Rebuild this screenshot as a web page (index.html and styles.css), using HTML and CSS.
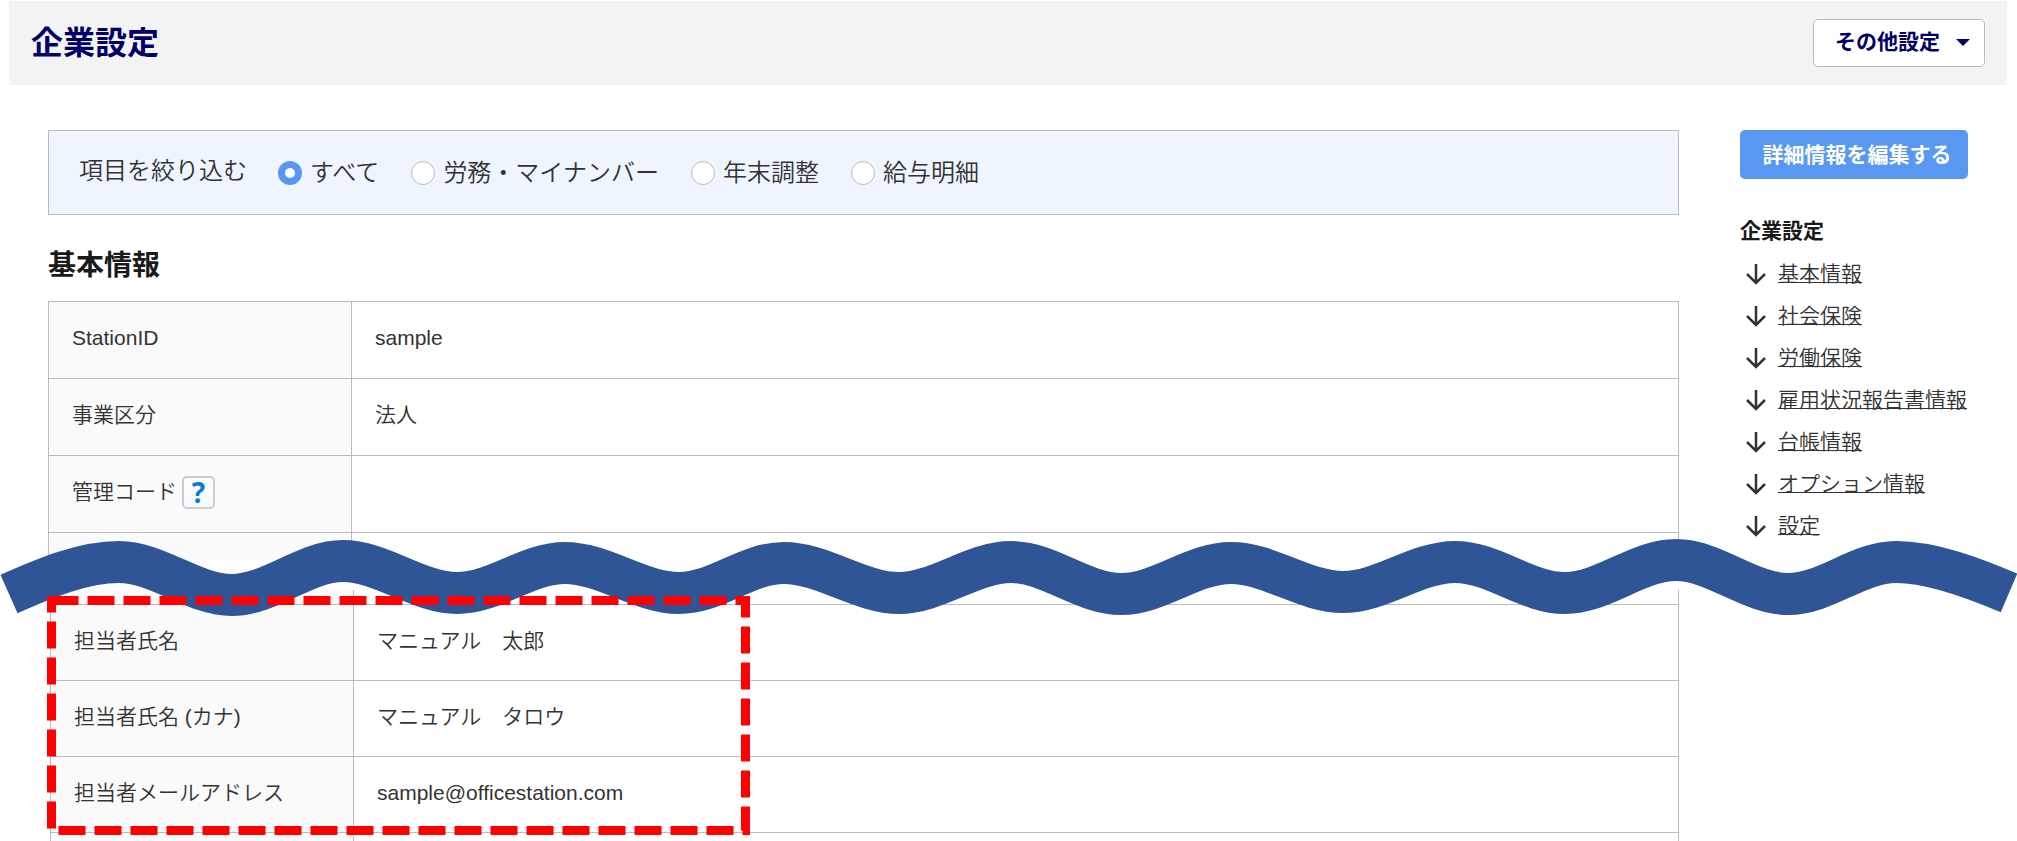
FILE: index.html
```html
<!DOCTYPE html>
<html lang="ja">
<head>
    <meta charset="UTF-8">
    <meta name="viewport" content="width=device-width, initial-scale=1">
    <title>企業設定</title>
    <link rel="stylesheet" href="styles.css">
</head>
<body>

<div class="page">
    <header class="page-header">
        <h1>企業設定</h1>
        <button type="button" class="menu-button" aria-haspopup="true">
            その他設定
            <span class="caret"></span>
        </button>
    </header>

    <div class="layout">
        <main class="content">
            <form class="filter">
                <span class="filter-title" id="filterTitle">項目を絞り込む</span>
                <div class="filter-options" role="radiogroup" aria-labelledby="filterTitle">
                    <label><input type="radio" name="filter" value="all" checked>すべて</label>
                    <label><input type="radio" name="filter" value="labor">労務・マイナンバー</label>
                    <label><input type="radio" name="filter" value="yearend">年末調整</label>
                    <label><input type="radio" name="filter" value="payslip">給与明細</label>
                </div>
            </form>

            <h2 id="basic">基本情報</h2>

            <table class="info-table">
                <tr>
                    <th scope="row">StationID</th>
                    <td>sample</td>
                </tr>
                <tr>
                    <th scope="row">事業区分</th>
                    <td>法人</td>
                </tr>
                <tr>
                    <th scope="row">
                        <div class="with-help">管理コード<button type="button" class="help">?</button></div>
                    </th>
                    <td></td>
                </tr>
                <tr class="cut-bottom">
                    <th></th>
                    <td></td>
                </tr>
            </table>

            <!-- 途中の項目を省略する波線 -->
            <div class="omission">
                <svg class="wave" viewBox="0 0 2017 90" preserveAspectRatio="none" aria-hidden="true">
                    <path d="M9,60 C45,44 83,28 119,28
                             C157,28 194,61 232,61 S305,27 343,27
                             S419,59 457,59 S527,29 565,29
                             S641,59 679,59 S746,29 784,29
                             S861,59 899,59 S973,28 1011,28
                             S1083,60 1121,60 S1193,29 1231,29
                             S1305,58 1343,58 S1417,28 1455,28
                             S1527,59 1565,59 S1638,26 1676,26
                             S1750,60 1788,60 S1858,28 1896,28
                             C1932,28 1974,44 2009,59"/>
                </svg>
            </div>

            <div class="contact">
                <table class="info-table info-table-contact">
                    <tr class="cut-top">
                        <th></th>
                        <td></td>
                    </tr>
                    <tr>
                        <th scope="row">担当者氏名</th>
                        <td>マニュアル　太郎</td>
                    </tr>
                    <tr>
                        <th scope="row">担当者氏名 (カナ)</th>
                        <td>マニュアル　タロウ</td>
                    </tr>
                    <tr>
                        <th scope="row">担当者メールアドレス</th>
                        <td>sample@officestation.com</td>
                    </tr>
                    <tr class="cut-end">
                        <th></th>
                        <td></td>
                    </tr>
                </table>
                <svg class="highlight" viewBox="0 0 703 239" aria-hidden="true">
                    <rect x="4.5" y="4.5" width="694" height="230"/>
                </svg>
            </div>
        </main>

        <aside class="side">
            <button type="button" class="edit-button">詳細情報を編集する</button>
            <nav class="side-nav" aria-labelledby="navTitle">
                <h3 id="navTitle">企業設定</h3>
                <ul>
                    <li><svg class="arrow" viewBox="0 0 22 22"><path d="M11 1v19M2 11l9 9 9-9"/></svg><a href="#basic">基本情報</a></li>
                    <li><svg class="arrow" viewBox="0 0 22 22"><path d="M11 1v19M2 11l9 9 9-9"/></svg><a href="#social">社会保険</a></li>
                    <li><svg class="arrow" viewBox="0 0 22 22"><path d="M11 1v19M2 11l9 9 9-9"/></svg><a href="#labor">労働保険</a></li>
                    <li><svg class="arrow" viewBox="0 0 22 22"><path d="M11 1v19M2 11l9 9 9-9"/></svg><a href="#employment">雇用状況報告書情報</a></li>
                    <li><svg class="arrow" viewBox="0 0 22 22"><path d="M11 1v19M2 11l9 9 9-9"/></svg><a href="#ledger">台帳情報</a></li>
                    <li><svg class="arrow" viewBox="0 0 22 22"><path d="M11 1v19M2 11l9 9 9-9"/></svg><a href="#option">オプション情報</a></li>
                    <li><svg class="arrow" viewBox="0 0 22 22"><path d="M11 1v19M2 11l9 9 9-9"/></svg><a href="#setting">設定</a></li>
                </ul>
            </nav>
        </aside>
    </div>
</div>

</body>
</html>
```
FILE: styles.css
```css
* { margin: 0; padding: 0; box-sizing: border-box; }
body {
    background: #fff;
    color: #333;
    font-family: "Liberation Sans", "Noto Sans CJK JP", sans-serif;
    font-size: 21px;
    font-weight: 350;
    line-height: 32px;
}
button {
    font: inherit;
    cursor: pointer;
}
.page {
    position: relative;
    padding-top: 1px;
}

/* Header */
.page-header {
    display: flex;
    justify-content: space-between;
    align-items: center;
    height: 84px;
    margin: 0 10px 0 9px;
    padding: 0 22px;
    background: #f3f3f3;
}
.page-header h1 {
    color: #006;
    font-size: 32px;
    line-height: 48px;
}
.menu-button {
    display: flex;
    align-items: center;
    gap: 16px;
    height: 48px;
    padding: 0 14px 2px 21px;
    border: 1px solid #bbb;
    border-radius: 5px;
    background: #fff;
    color: #006;
    font-weight: bold;
}
.caret {
    border: 7px solid transparent;
    border-top-color: #006;
    border-bottom: 0;
}

/* Layout */
.layout {
    display: flex;
    gap: 61px;
    padding: 45px 49px 0 48px;
}
.content { flex: 1; min-width: 0; }
.side { width: 228px; }

/* Filter */
.filter {
    display: flex;
    align-items: center;
    gap: 31px;
    height: 85px;
    padding: 0 30px;
    border: 1px solid #bbb;
    background: #eef5ff;
    font-size: 24px;
}
.filter-title { padding-bottom: 4px; }
.filter-options {
    display: flex;
    gap: 32px;
}
.filter-options label {
    display: flex;
    align-items: center;
    gap: 8px;
}
.filter-options input {
    appearance: none;
    width: 24px;
    height: 24px;
    border: 1px solid #bbb;
    border-radius: 50%;
    background: #fff;
}
.filter-options input:checked { border: 7px solid #5998f0; }

.content h2 {
    margin: 31px 0 15px;
    color: #1a1a1a;
    font-size: 28px;
    line-height: 40px;
}

/* Tables */
.info-table {
    width: 100%;
    border-collapse: collapse;
    table-layout: fixed;
}
.info-table th,
.info-table td {
    height: 77px;
    padding: 0 23px 4px;
    border: 1px solid #bbb;
    font-weight: 350;
    text-align: left;
}
.info-table th {
    width: 303px;
    background: #fafafa;
}
.info-table-contact th,
.info-table-contact td {
    height: 76px;
    padding-bottom: 3px;
}
.info-table .cut-bottom > * {
    height: 27px;
    padding: 0;
    border-bottom: 0;
}
.info-table .cut-top > * {
    height: 15px;
    padding: 0;
    border-top: 0;
}
.info-table .cut-end > * {
    height: 8px;
    padding: 0;
    border-bottom: 0;
}
.with-help {
    display: flex;
    align-items: center;
    gap: 5px;
}
.help {
    width: 33px;
    height: 33px;
    border: 2px solid #ccc;
    border-radius: 5px;
    background: linear-gradient(#fff, #f2f9ff);
    color: #0b7bd3;
    font-family: "Noto Sans", sans-serif;
    font-size: 28px;
    font-weight: bold;
    line-height: 28px;
}

/* Wave over the omitted rows */
.omission { height: 30px; }
.wave {
    position: absolute;
    left: 0;
    z-index: 1;
    width: 100%;
    height: 90px;
    margin-top: -26px;
    fill: none;
    stroke: #2f5597;
    stroke-width: 42;
}

/* Contact rows and their frame */
.contact {
    position: relative;
    padding-left: 2px;
}
.highlight {
    position: absolute;
    top: 6px;
    left: -1px;
    z-index: 2;
    width: 703px;
    height: 239px;
    fill: none;
    stroke: #f00;
    stroke-width: 9;
    stroke-dasharray: 27 9;
}

/* Side */
.edit-button {
    width: 100%;
    height: 49px;
    padding: 0 16px 0 22px;
    border: 0;
    border-radius: 5px;
    background: #5998f0;
    color: #fff;
    font-weight: bold;
    white-space: nowrap;
}
.side-nav { margin-top: 36px; }
.side-nav h3 {
    color: #1a1a1a;
    font-size: 21px;
    line-height: 32px;
    margin-bottom: 6px;
}
.side-nav ul { list-style: none; }
.side-nav li {
    display: flex;
    align-items: center;
    gap: 11px;
    height: 42px;
    padding-left: 5px;
    white-space: nowrap;
}
.side-nav a {
    color: #333;
    text-decoration: underline 1px;
    text-decoration-skip-ink: none;
    text-underline-offset: 1px;
}
.arrow {
    width: 22px;
    height: 22px;
    fill: none;
    stroke: #333;
    stroke-width: 2.5;
}
```
